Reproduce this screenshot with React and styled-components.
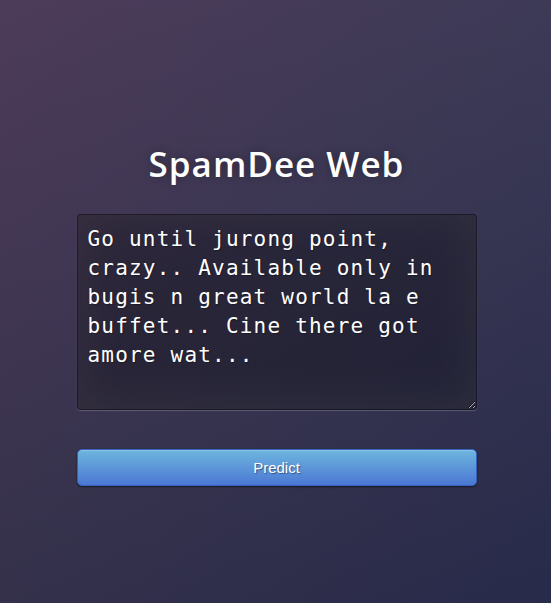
import React from 'react';
import styled, { createGlobalStyle } from 'styled-components';

// STYLES
const GlobalStyle = createGlobalStyle`
    html, body {
        margin: 0;
        padding: 0;
        height: 100%;
    }
    body {
        background-color: #38344f;
        background-image:
            linear-gradient(to bottom, rgba(90,100,140,0.12) 0%, rgba(0,0,10,0.06) 100%),
            linear-gradient(135deg, #4b3652 0%, #38344f 50%, #2a2d4e 100%);
        background-attachment: fixed;
    }
`

const Wrapper = styled.div`
    min-height: 100vh;
    box-sizing: border-box;
    display: flex;
    flex-direction: column;
    align-items: center;
    padding: 142px 0 0 2px;
`

const Form = styled.form`
    width: 400px;
    display: flex;
    flex-direction: column;
`

const Title = styled.h1`
    margin: 0 0 28px;
    font-family: "Open Sans", sans-serif;
    font-weight: 600;
    font-size: 35px;
    line-height: 44px;
    letter-spacing: 1px;
    text-align: center;
    color: #fff;
    text-shadow: 0 0 10px rgba(0,0,0,0.3);
`

const MessageBox = styled.textarea`
    box-sizing: border-box;
    width: 100%;
    height: 196px;
    margin: 0;
    padding: 10px;
    font-family: "DejaVu Sans Mono", monospace;
    font-size: 21px;
    letter-spacing: 1.2px;
    line-height: 29px;
    color: #fff;
    text-shadow: 1px 1px 1px rgba(0,0,0,0.3);
    background: rgba(0,0,0,0.3);
    border: 1px solid rgba(0,0,0,0.3);
    border-radius: 4px;
    outline: none;
    box-shadow: inset 0 -5px 45px rgba(100,100,100,0.2), 0 1px 1px rgba(255,255,255,0.2);
    resize: vertical;
`

const PredictButton = styled.button`
    box-sizing: border-box;
    width: 100%;
    height: 37px;
    margin-top: 39px;
    padding: 9px 14px;
    font-family: "Liberation Sans", Arial, sans-serif;
    font-size: 15px;
    color: #fff;
    text-shadow: 1px 1px 1px rgba(0,0,0,0.4);
    background-color: #4a77d4;
    background-image: linear-gradient(to bottom, #6eb6de, #4a77d4);
    border: 1px solid #3762bc;
    border-radius: 5px;
    box-shadow: inset 0 1px 0 rgba(255,255,255,0.2), 0 1px 2px rgba(0,0,0,0.5);
    cursor: pointer;
`

const sample = 'Go until jurong point, crazy.. Available only in bugis n great world la e buffet... Cine there got amore wat...';

export default function App() {
    return (
        <>
            <GlobalStyle />
            <Wrapper>
                <Form onSubmit={e => e.preventDefault()}>
                    <Title>SpamDee Web</Title>
                    <MessageBox defaultValue={sample} />
                    <PredictButton type="submit">Predict</PredictButton>
                </Form>
            </Wrapper>
        </>
    );
}
